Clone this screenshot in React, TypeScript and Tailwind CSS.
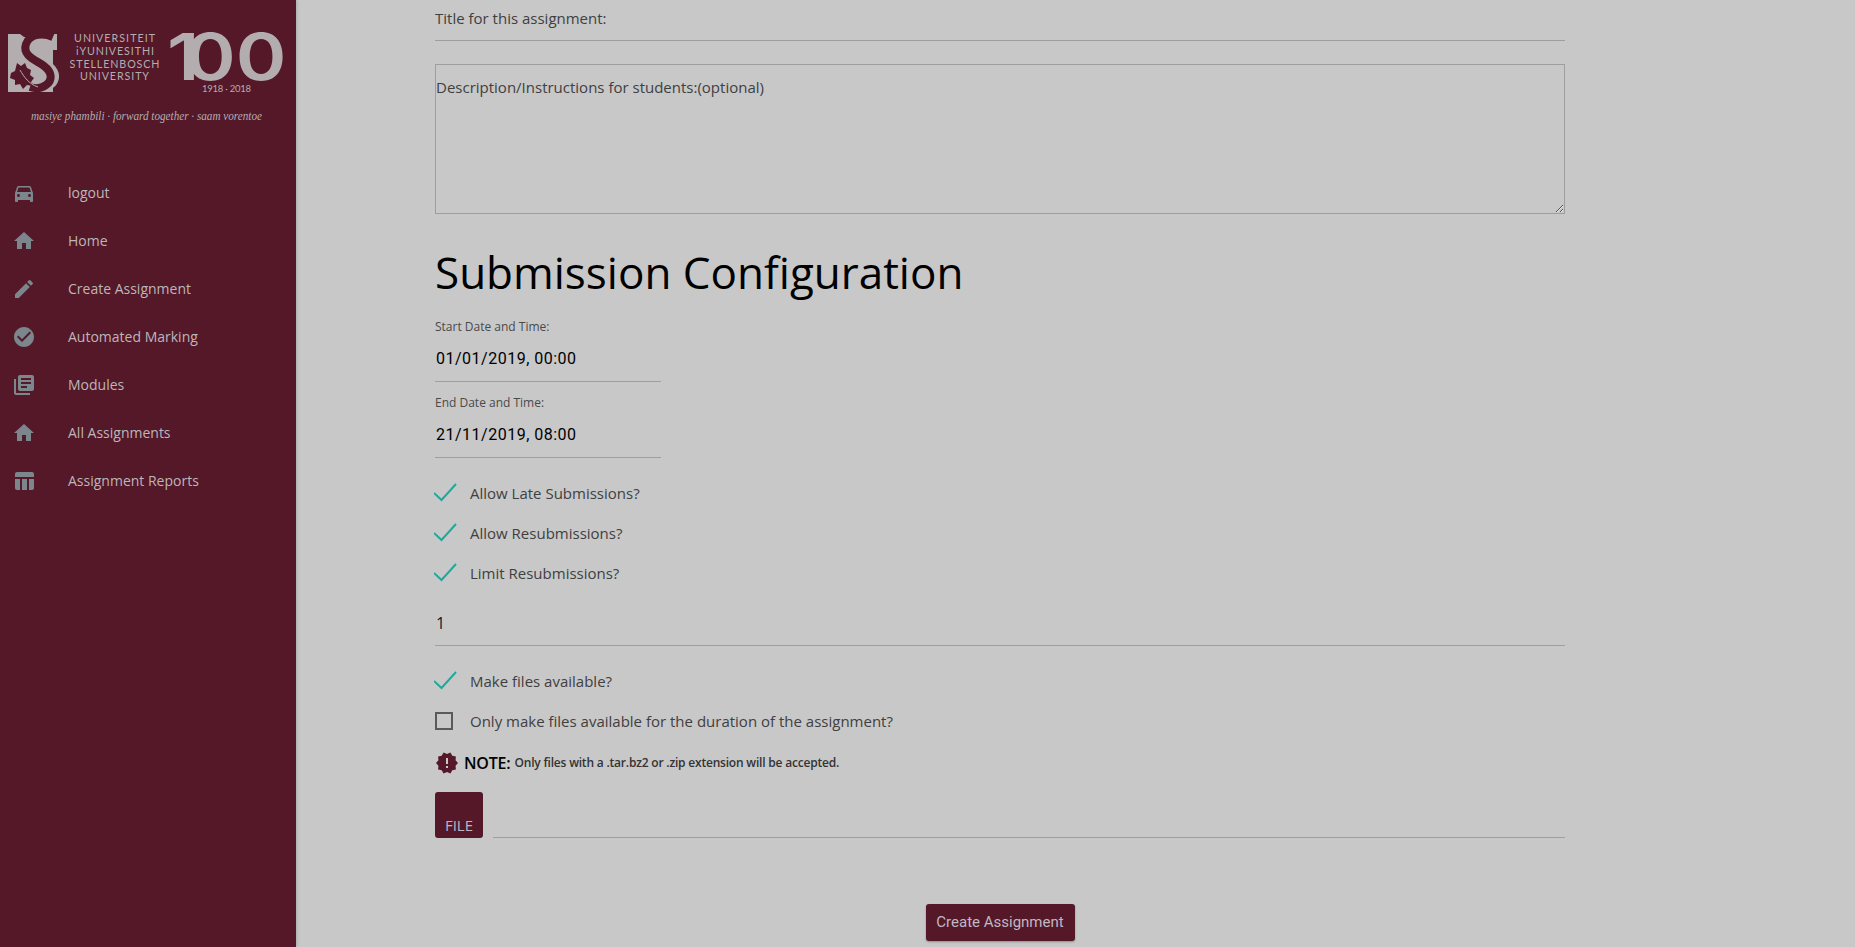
import React from 'react';
import { MdDirectionsCar, MdHome, MdEdit, MdCheckCircle, MdLibraryBooks, MdTableChart, MdNewReleases } from 'react-icons/md';

const navItems = [
  { label: 'logout', icon: MdDirectionsCar },
  { label: 'Home', icon: MdHome },
  { label: 'Create Assignment', icon: MdEdit },
  { label: 'Automated Marking', icon: MdCheckCircle },
  { label: 'Modules', icon: MdLibraryBooks },
  { label: 'All Assignments', icon: MdHome },
  { label: 'Assignment Reports', icon: MdTableChart },
];

const Logo = () => (
  <svg width="296" height="140" viewBox="0 0 296 140" fill="#b3adb0">
    <rect x="8" y="34" width="45" height="58" />
    <path d="M44 58C53 62 60 70 59 78C58 84 55 87 51 89Z" />
    <path d="M53 34H57V50H53Z" />
    <path d="M53 37C44 33 30 33 26 44C22 56 36 60 44 66C52 72 53 80 46 85C42 88 36 89 30 87" fill="none" stroke="#541829" strokeWidth="8" />
    <path d="M20 34H50V37H24Z" fill="#541829" />
    <path d="M11 73L15 71L17 63L21 66L25 63L27 68L31 70L30 75L34 78L31 82L33 86L27 85L23 89L20 84L15 85L15 80L10 78Z" fill="#541829" />
    <path d="M20 70C24 77 29 84 38 87" fill="none" stroke="#b3adb0" strokeWidth="1" />
    <g fontFamily="Lato">
      <text x="114.500" y="42" textAnchor="middle" fontSize="10.700" textLength="81" lengthAdjust="spacing">UNIVERSITEIT</text>
      <text x="115" y="55" textAnchor="middle" fontSize="10.700" textLength="78" lengthAdjust="spacing">iYUNIVESITHI</text>
      <text x="114.500" y="68" textAnchor="middle" fontSize="10.700" textLength="90" lengthAdjust="spacing">STELLENBOSCH</text>
      <text x="114.500" y="80" textAnchor="middle" fontSize="10.700" textLength="69" lengthAdjust="spacing">UNIVERSITY</text>
      <text transform="translate(167 80) scale(1.2 1)" fontFamily="Inter" fontSize="64" fontWeight="600">1<tspan dx="-12">00</tspan></text>
      <text x="226.500" y="92" textAnchor="middle" fontSize="9.500" textLength="49" lengthAdjust="spacing">1918 · 2018</text>
    </g>
    <text x="146.500" y="120" textAnchor="middle" fontFamily="Liberation Serif" fontStyle="italic" fontSize="11.500" textLength="231" lengthAdjust="spacingAndGlyphs">masiye phambili · forward together · saam vorentoe</text>
  </svg>
);

const Check = () => (
  <svg width="24" height="20" viewBox="0 0 24 20" fill="none" stroke="#1fa99b" strokeWidth="2" className="shrink-0">
    <path d="M0 10L7.500 17L22 1" />
  </svg>
);

const CheckRow = ({ label, checked = true }: { label: string; checked?: boolean }) => (
  <div className="flex h-10 items-center">
    <div className="flex w-[35px] items-center">
      {checked ? <div className="-ml-px"><Check /></div> : <div className="h-[18px] w-[18px] border-2 border-[#5a5a5a]" />}
    </div>
    <span className="text-[15px] text-[#404040]">{label}</span>
  </div>
);

const DateField = ({ label, value }: { label: string; value: string }) => (
  <div className="w-[226px]">
    <div className="flex h-[20px] items-center text-xs text-[#4a4a4a]">{label}</div>
    <div className="flex h-[45px] items-center border-b border-[#9e9e9e] pl-px font-['Roboto'] text-base tracking-[0.5px] text-black">{value}</div>
  </div>
);

const App: React.FC = () => {
  return (
    <div className="flex h-screen overflow-hidden bg-[#c8c8c8] font-['Open_Sans',sans-serif]">
      <aside className="h-full w-[296px] shrink-0 bg-[#541829] shadow-[1px_0_3px_rgba(0,0,0,0.15)]">
        <Logo />
        <nav className="mt-[29px]">
          {navItems.map((item) => (
            <div key={item.label} className="flex h-12 items-center pl-3">
              <item.icon size={24} className="text-[#7b878c]" />
              <span className="ml-[32px] text-sm text-[#bcb6b9]">{item.label}</span>
            </div>
          ))}
        </nav>
      </aside>

      <main className="ml-[139px] flex w-[1130px] flex-col">
        <input
          placeholder="Title for this assignment:"
          className="h-[41px] shrink-0 border-b border-[#9e9e9e] pb-[4px] text-[15px] outline-none placeholder:text-[#404040]"
        />
        <textarea
          placeholder="Description/Instructions for students:(optional)"
          className="mt-[23px] h-[150px] shrink-0 border border-[#9e9e9e] pt-[11px] text-[15px] outline-none placeholder:text-[#404040]"
        />
        <h2 className="mt-[29px] h-[58px] text-[44px] leading-[58px] text-black">Submission Configuration</h2>
        <div className="mt-[16px]">
          <DateField label="Start Date and Time:" value="01/01/2019, 00:00" />
        </div>
        <div className="mt-[11px]">
          <DateField label="End Date and Time:" value="21/11/2019, 08:00" />
        </div>
        <div className="mt-[15px]">
          <CheckRow label="Allow Late Submissions?" />
          <CheckRow label="Allow Resubmissions?" />
          <CheckRow label="Limit Resubmissions?" />
        </div>
        <input
          defaultValue="1"
          className="mt-[9px] h-[44px] shrink-0 border-b border-[#9e9e9e] pl-px pb-[2px] text-base text-[#101a2b] outline-none"
        />
        <div className="mt-[15px]">
          <CheckRow label="Make files available?" />
          <CheckRow label="Only make files available for the duration of the assignment?" checked={false} />
        </div>
        <div className="mt-[12px] flex h-[20px] items-center">
          <MdNewReleases size={24} className="shrink-0 text-[#541829]" />
          <span className="ml-[5px] text-base font-semibold tracking-[-0.2px] text-black">NOTE:</span>
          <span className="ml-[4px] text-xs font-semibold tracking-[-0.2px] text-[#333]">
            Only files with a .tar.bz2 or .zip extension will be accepted.
          </span>
        </div>
        <div className="mt-[19px] flex items-end">
          <button className="flex h-[46px] w-[48px] shrink-0 items-end justify-center rounded-[3px] bg-[#541829] pb-[2px] text-[15px] text-[#bcb6c4]">
            FILE
          </button>
          <div className="ml-[10px] flex-1 border-b border-[#9e9e9e]" />
        </div>
        <div className="mt-[66px] flex justify-center">
          <button className="h-[37px] w-[149px] rounded-[3px] bg-[#541829] font-['Roboto'] text-[15px] text-[#c0b8c4] shadow-[0_1px_2px_rgba(0,0,0,0.3)]">
            Create Assignment
          </button>
        </div>
      </main>
    </div>
  );
};

export default App;
